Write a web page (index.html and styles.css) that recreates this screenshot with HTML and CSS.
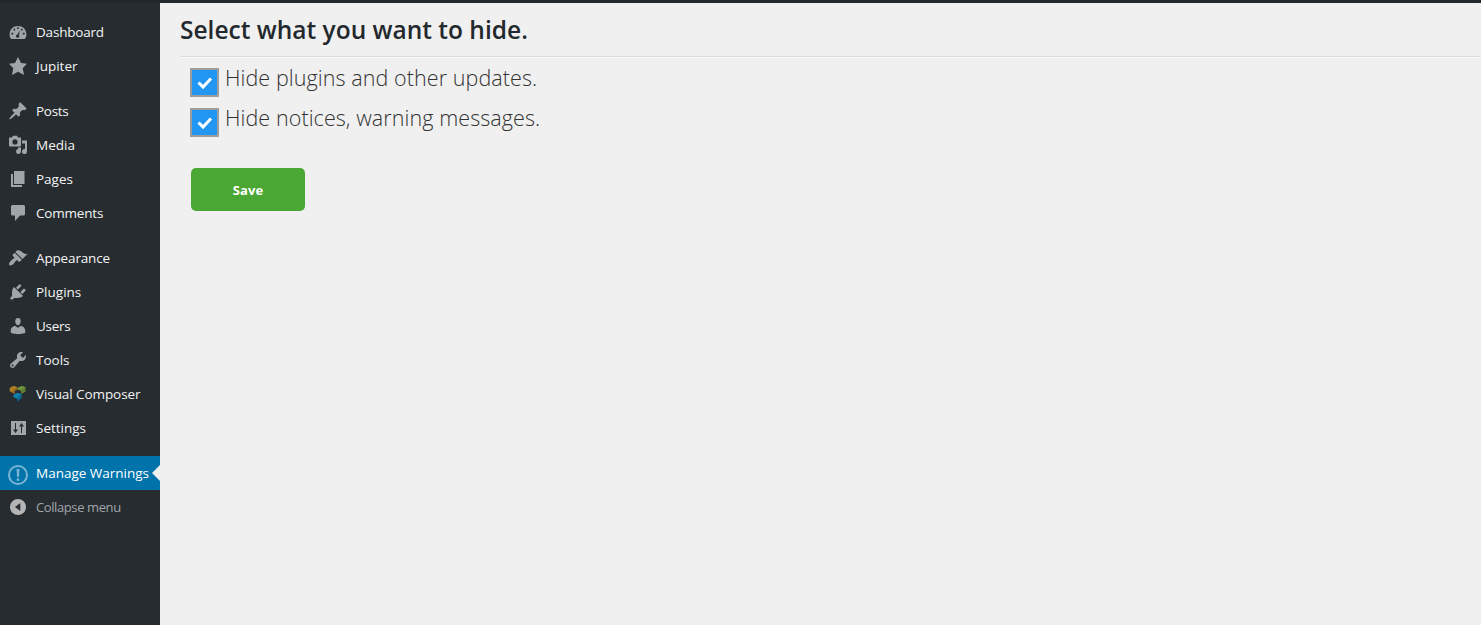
FILE: index.html
```
<!DOCTYPE html>
<html lang="en">
<head>
<meta charset="utf-8">
<title>Manage Warnings</title>
<link rel="stylesheet" href="styles.css">
</head>
<body>
<div class="topbar"></div>
<div class="layout">
<nav class="sidebar">
  <a class="item"><svg class="icon" viewBox="0 1 20 20"><path fill-rule="evenodd" d="M3.300 18C2 16.600 1.600 15 1.600 13.400C1.600 8.500 5.300 5 10 5S18.400 8.500 18.400 13.400C18.400 15 18 16.600 16.700 18ZM9.200 6.200h1.600v1.800H9.200zM5.500 7.700h1.700v1.700H5.500zM12.900 7.700h1.700v1.700h-1.700zM3.400 11.700h1.800v1.700H3.400zM14.800 11.700h1.800v1.700h-1.800zM11.800 9.500l-.7 4.700a1.700 1.700 0 1 1-1.700-.8z"/></svg><span class="t-dashboard">Dashboard</span></a>
  <a class="item"><svg class="icon" viewBox="0 0 20 20"><path d="M10 1l3 6 6 .8-4.300 4.400L16 19l-6-3.200L4 19l1.300-6.800L1 7.800 7 7z"/></svg><span class="t-jupiter">Jupiter</span></a>
  <div class="separator"></div>
  <a class="item"><svg class="icon" viewBox="0 0 20 20"><path d="M10.440 3.020l1.820-1.820 6.360 6.350-1.830 1.820c-1.050-.68-2.480-.57-3.410.36l-.75.750c-.92.930-1.040 2.350-.35 3.410l-1.830 1.820-2.410-2.410-2.800 2.790c-.42.420-3.380 2.710-3.800 2.290s1.860-3.390 2.280-3.810l2.790-2.790L4.100 9.360l1.830-1.820c1.050.69 2.480.57 3.400-.36l.75-.750c.93-.920 1.050-2.350.36-3.410z"/></svg><span class="t-posts">Posts</span></a>
  <a class="item"><svg class="icon" viewBox="0 0 20 20"><path fill-rule="evenodd" d="M1.500 2.500H4l1-1.800h4l1 1.800h2.500q.5 0 .5.500v7.500q0 1-1 1H2q-1 0-1-1V3q0-.5.500-.5zM7 4.300a2.600 2.600 0 1 0 0 5.200 2.600 2.600 0 0 0 0-5.200zM14 5.500h5v11a2.500 2.500 0 1 1-2-2.450V8.500h-3zM10 12.500h3v4a2.500 2.500 0 1 1-3-2.450z"/></svg><span class="t-media">Media</span></a>
  <a class="item"><svg class="icon" viewBox="0 0 20 20"><path d="M6 2h10.500v13H6zM3 5h2v11h9v2H3z"/></svg><span class="t-pages">Pages</span></a>
  <a class="item"><svg class="icon" viewBox="0 0 20 20"><path d="M4.500 2h11Q17 2 17 3.500v7.500q0 1.500-1.500 1.500H12l-5 5.500v-5.500H4.500Q3 12.500 3 11V3.500Q3 2 4.500 2z"/></svg><span class="t-comments">Comments</span></a>
  <div class="separator"></div>
  <a class="item"><svg class="icon" viewBox="0 0 20 20"><path d="M14.480 11.060L7.410 3.990l1.500-1.500c.5-.56 2.300-.47 3.510.320 1.210.800 1.430 1.280 2.910 2.100 1.180.640 2.450 1.260 4.450.850zm-.71.710L6.700 4.700 4.930 6.470c-.39.390-.39 1.020 0 1.410l1.060 1.060c.39.390.39 1.030 0 1.420-.6.600-1.430 1.110-2.210 1.690-.35.260-.7.530-1.010.840C1.430 14.230.4 16.080 1.400 17.070c.990 1 2.840-.030 4.180-1.360.31-.31.580-.66.850-1.020.57-.78 1.080-1.610 1.690-2.210.39-.39 1.020-.39 1.410 0l1.060 1.060c.39.390 1.020.390 1.410 0z"/></svg><span class="t-appearance">Appearance</span></a>
  <a class="item"><svg class="icon" viewBox="0 0 20 20"><path d="M13.110 4.360L9.870 7.600 8 5.730l3.240-3.240c.35-.34 1.050-.2 1.560.320.520.510.660 1.210.310 1.550zm-8 1.770l.91-1.120 9.010 9.010-1.190.840c-.71.710-2.630 1.160-3.820 1.160H6.140L4.900 17.260c-.59.590-1.540.59-2.120 0-.59-.58-.59-1.530 0-2.120l1.240-1.240v-3.880c0-1.130.4-3.190 1.090-3.890zm7.260 3.970l3.240-3.240c.34-.35 1.040-.21 1.550.31.520.51.660 1.210.310 1.550l-3.240 3.250z"/></svg><span class="t-plugins">Plugins</span></a>
  <a class="item"><svg class="icon" viewBox="0 0 20 20"><path d="M10 9.250c-2.270 0-2.730-3.440-2.730-3.440C7 4.020 7.820 2 9.970 2c2.160 0 2.980 2.020 2.710 3.810 0 0-.41 3.440-2.680 3.440zm0 2.570L12.720 10c2.390 0 4.520 2.330 4.520 4.530v2.490s-3.650 1.130-7.240 1.130c-3.650 0-7.240-1.130-7.240-1.130v-2.490c0-2.250 1.940-4.480 4.470-4.480z"/></svg><span class="t-users">Users</span></a>
  <a class="item"><svg class="icon" viewBox="0 0 20 20"><path d="M16.680 9.770c-1.340 1.340-3.300 1.670-4.950.990l-5.410 6.520c-.99.990-2.590.990-3.580 0s-.99-2.590 0-3.570l6.520-5.420c-.68-1.650-.35-3.610.99-4.950 1.280-1.280 3.120-1.620 4.720-1.060l-2.890 2.890 2.820 2.820 2.860-2.870c.53 1.580.180 3.390-1.080 4.650zM3.810 16.210c.4.390 1.040.390 1.430 0 .4-.4.400-1.040 0-1.430-.39-.4-1.030-.4-1.430 0-.39.390-.39 1.030 0 1.430z"/></svg><span class="t-tools">Tools</span></a>
  <a class="item"><svg class="icon" viewBox="0 0 20 20"><path fill="#8e6520" d="M1.800 4L5.500 2l3.900 1.300v2.500L7 7v3L1.800 7.800z"/><path fill="#b07f22" d="M1.800 4L5.500 2l3.900 1.300L6 5.500 5 8 1.800 6.500z"/><path fill="#5f7d35" d="M9.600 4l4-2 4 1.200v4.300L13.500 10 12.600 6.500 9.600 5.500z"/><path fill="#6f943b" d="M9.600 4l4-2 4 1.200L14 5.500l-1 1-3.400-1z"/><path fill="#0b6994" d="M5.600 10.800l4-2 4 1.400v3.600L9.800 17.800 9 14.500l-3.400-1.200z"/><path fill="#1180ad" d="M5.600 10.800l4-2 4 1.400-3.600 2-1 2.300-3.400-1.200z"/></svg><span class="t-composer">Visual Composer</span></a>
  <a class="item"><svg class="icon" viewBox="0 0 20 20"><path fill-rule="evenodd" d="M3 3h15v14H3zM7 5v6.500H5L7.500 15l2.500-3.500H8V5zM13 15V8.500h-2L13.500 5 16 8.500h-2V15z"/></svg><span class="t-settings">Settings</span></a>
  <div class="separator"></div>
  <a class="item current"><svg class="icon warning" viewBox="0 0 20 20"><circle cx="10" cy="10" r="9"/><path d="M8.500 4h3l-.6 8H9.100z"/><circle class="dot" cx="10" cy="14.700" r="1.400"/></svg><span class="t-manage">Manage Warnings</span></a>
  <a class="item collapse"><svg class="icon" viewBox="0 0 20 20"><path fill-rule="evenodd" d="M10 2a8 8 0 1 1 0 16 8 8 0 0 1 0-16zM12.300 6L7 10l5.300 4z"/></svg><span class="t-collapse">Collapse menu</span></a>
</nav>
<main class="content">
  <h1 class="heading"><span class="t-heading">Select what you want to hide.</span></h1>
  <form class="options">
    <label class="option"><span class="box"><svg class="tick" viewBox="0 0 25 25"><path d="M6.500 12.500l4.500 4.500 8-8.500"/></svg></span><span class="t-updates">Hide plugins and other updates.</span></label>
    <label class="option"><span class="box"><svg class="tick" viewBox="0 0 25 25"><path d="M6.500 12.500l4.500 4.500 8-8.500"/></svg></span><span class="t-notices">Hide notices, warning messages.</span></label>
    <button class="save" type="button">Save</button>
  </form>
</main>
</div>
</body>
</html>
```
FILE: styles.css
```
* { box-sizing: border-box; }
body {
  margin: 0;
  height: 625px;
  overflow: hidden;
  background: #f0f0f0;
  font-family: "Open Sans", "Noto Sans", sans-serif;
}
.topbar { height: 3px; background: #23282d; }
.layout { display: flex; height: 622px; }
.sidebar { width: 160px; flex: none; padding-top: 12px; background: #272c30; }
.item {
  position: relative;
  display: flex;
  align-items: center;
  gap: 8px;
  height: 34px;
  padding-left: 8px;
  color: #f4f4f4;
  font-size: 13.500px;
  line-height: 18px;
  white-space: nowrap;
}
.icon { width: 20px; height: 20px; flex: none; fill: #a0a5aa; }
.t-dashboard, .t-comments { letter-spacing: -0.200px; }
.t-appearance { letter-spacing: -0.150px; }
.t-posts, .t-users { letter-spacing: -0.300px; }
.t-composer { letter-spacing: -0.080px; }
.separator { height: 11px; }
.current { background: #0073aa; color: #fff; }
.current::after {
  content: "";
  position: absolute;
  right: 0;
  top: 9px;
  border: 8px solid transparent;
  border-left: 0;
  border-right-color: #f0f0f0;
}
.warning { margin-top: 4px; fill: #79b5d3; }
.warning circle { fill: none; stroke: #79b5d3; stroke-width: 2; }
.warning .dot { fill: #79b5d3; stroke: none; }
.collapse { color: #a0a5aa; font-size: 13px; letter-spacing: -0.400px; }
.collapse .icon { fill: #b4b4b4; }
.content { flex: 1; padding-left: 20px; }
.heading {
  height: 54px;
  margin: 0;
  padding-top: 9px;
  border-bottom: 1px solid #dadada;
  box-shadow: 0 1px #f9f9f9;
  color: #23282d;
  font-size: 24.500px;
  line-height: 36px;
  font-weight: 600;
  white-space: nowrap;
}
.options { padding: 11px 0 0 10px; }
.option {
  display: flex;
  gap: 6px;
  height: 40px;
  color: #333;
  font-size: 21.500px;
  font-weight: 300;
  letter-spacing: 0.080px;
  line-height: 19px;
  white-space: nowrap;
}
.box { width: 29px; height: 29px; flex: none; border: 2px solid #9d9d9d; background: #2196f3; }
.tick { display: block; width: 25px; height: 25px; fill: none; stroke: #fff; stroke-width: 3; }
.save {
  display: block;
  width: 114px;
  height: 43px;
  margin: 20px 0 0 1px;
  padding: 0;
  border: 0;
  border-radius: 5px;
  background: #4aa733;
  color: #fff;
  font: 700 13px/20px "Open Sans", sans-serif;
  letter-spacing: 0.100px;
}
```
